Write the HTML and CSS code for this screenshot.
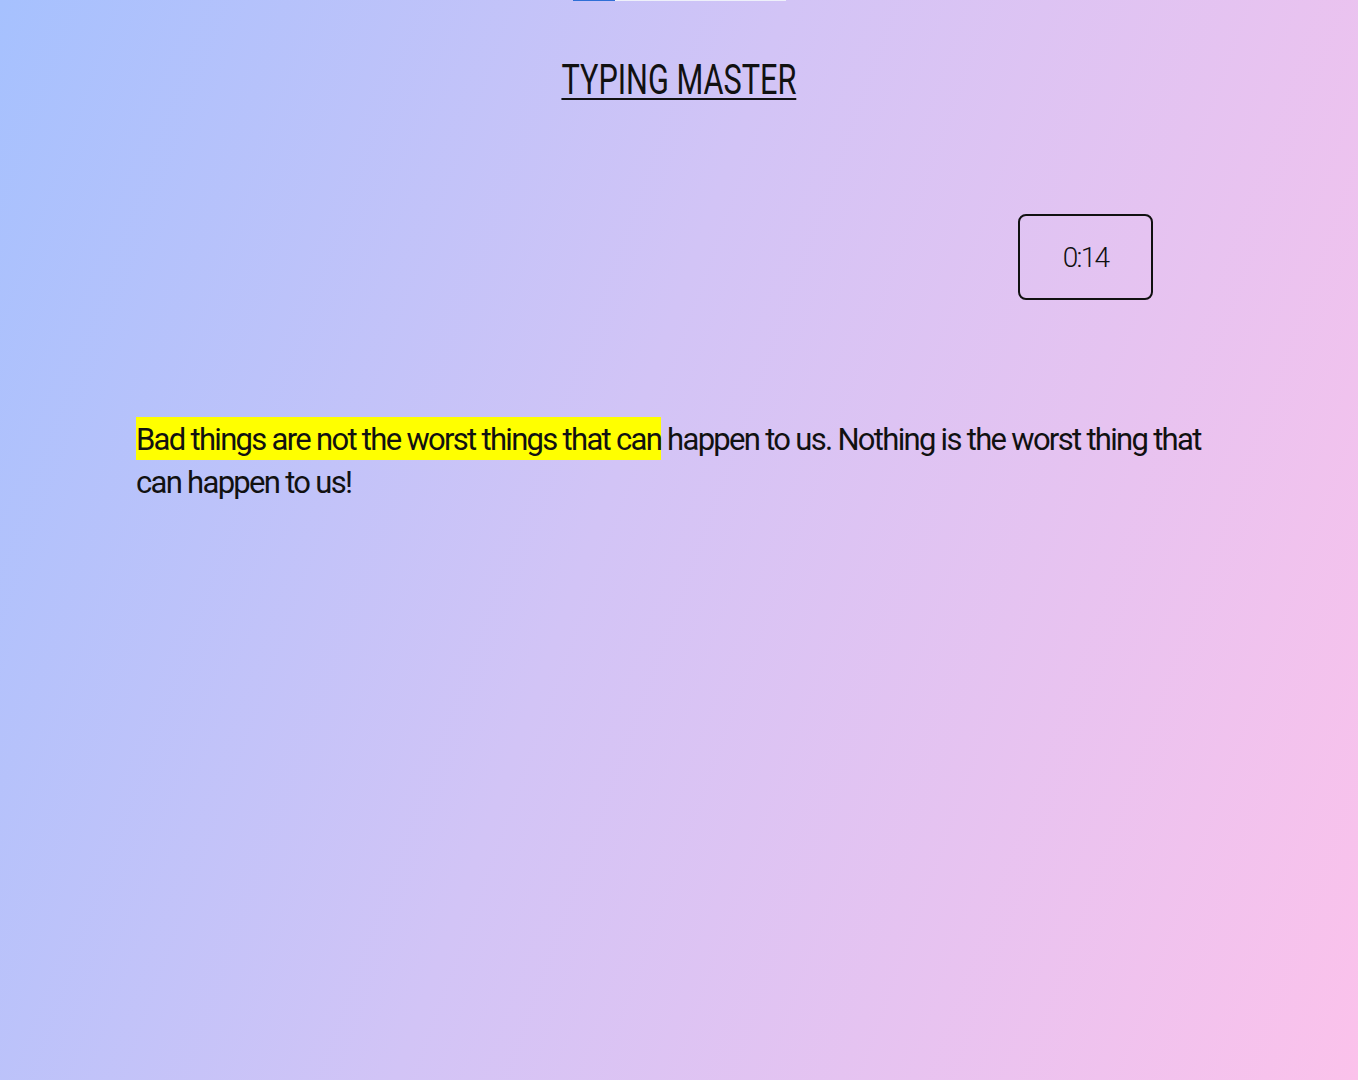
FILE: index.html
```html
<!DOCTYPE html>
<html>
<head>
<meta charset="utf-8">
<link rel="stylesheet" href="styles.css">
</head>
<body>
<div class="progress"><div class="progress-fill"></div></div>
<h1 class="title"><span class="title-text">TYPING MASTER</span></h1>
<div class="timer-row"><div class="timer">0:14</div></div>
<p class="quote"><span class="typed">Bad things are not the worst things that can</span> happen to us. Nothing is the worst thing that can happen to us!</p>
</body>
</html>
```
FILE: styles.css
```css
html, body { height: 100%; }
body {
  margin: 0;
  background: linear-gradient(110deg, #a6c1fe 0%, #d2c4f6 45%, #fbc2eb 100%);
  font-family: "Roboto", sans-serif;
  color: #111;
  overflow: hidden;
}
.progress {
  width: 213px;
  height: 1px;
  margin: 0 auto;
  background: #eef0fa;
}
.progress-fill { width: 42px; height: 1px; background: #2f6fd6; }
.title {
  margin: 58px 0 0;
  text-align: center;
  font-family: "Roboto", sans-serif;
  font-weight: 400;
  font-size: 42px;
  line-height: 42px;
}
.title-text {
  display: inline-block;
  transform: scaleX(0.73);
  text-decoration: underline;
  text-decoration-thickness: 2px;
  text-underline-offset: 4px;
}
.timer-row {
  display: flex;
  justify-content: flex-end;
  padding: 0 205px 0 0;
  margin-top: 113px;
}
.timer {
  width: 131px;
  height: 82px;
  border: 2px solid #111;
  border-radius: 8px;
  display: flex;
  align-items: center;
  justify-content: center;
  font-family: "Roboto", sans-serif;
  font-weight: 300;
  font-size: 28px;
  letter-spacing: -1.8px;
}
.quote {
  margin: 118px 0 0;
  padding: 0 136px;
  font-family: "Roboto", sans-serif;
  font-size: 31px;
  line-height: 43px;
  letter-spacing: -1.7px;
}
.typed {
  background: #ffff00;
  padding: 4px 0 2px;
}
```
